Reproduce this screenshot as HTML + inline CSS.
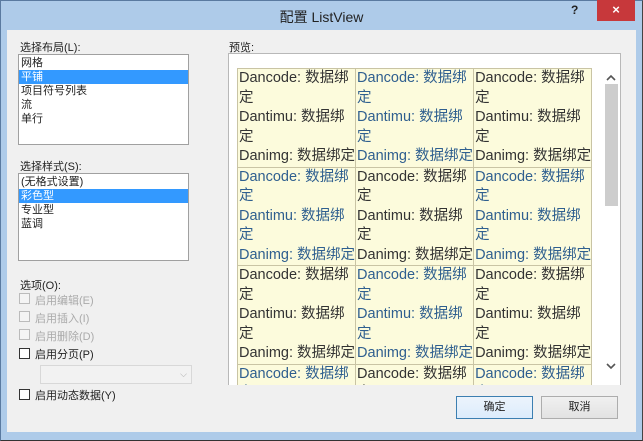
<!DOCTYPE html>
<html><head><meta charset="utf-8"><style>
*{margin:0;padding:0;box-sizing:border-box}
body{width:643px;height:441px;overflow:hidden;background:#aecbe9;font-family:"Liberation Sans","Microsoft YaHei","Noto Sans CJK SC",sans-serif;font-size:12px;color:#222;position:relative}
.a{position:absolute}
.frame{left:0;top:0;width:643px;height:441px;border:1px solid #5a7aa0;border-right-color:#444;border-bottom-color:#333}
.title{left:0;top:7px;width:643px;text-align:center;font-size:14px;color:#222}
.client{left:7px;top:30px;width:629px;height:402px;background:#f0f0f0}
.lb{background:#fff;border:1px solid #a0a0a0;padding-top:1px}
.lb div{height:14px;line-height:14px;padding-left:2px;font-size:11px}
.sel{background:#3399ff;color:#fff}
.lbl{font-size:11px}
.cb{width:11px;height:11px;border:1px solid #333;background:#fff}
.cbd{border-color:#bbb;background:#f4f4f4}
.dis{color:#aaa}
table{border-collapse:collapse;table-layout:fixed}
td{width:118px;height:98px;background:#fcfbdc;border:1px solid #c9c4a4;vertical-align:top;font-size:14.5px;line-height:19.5px;padding-left:1px;white-space:nowrap;overflow:hidden;color:#333}
td.b{color:#2f5f8f}
.btn{border:1px solid #adadad;background:linear-gradient(#f0f0f0,#e2e2e2);text-align:center;line-height:20px;font-size:11px}
</style></head><body>
<div class="a frame"></div>
<div class="a title">配置 ListView</div>
<div class="a" style="left:571px;top:3px;font-weight:bold;font-size:12px">?</div>
<div class="a" style="left:597px;top:0;width:38px;height:21px;background:#c7383b;color:#fff;text-align:center;line-height:20px;font-size:13px;font-weight:bold">×</div>
<div class="a client"></div>

<div class="a lbl" style="left:20px;top:39px">选择布局(L):</div>
<div class="a lb" style="left:18px;top:54px;width:171px;height:91px">
<div>网格</div><div class="sel">平铺</div><div>项目符号列表</div><div>流</div><div>单行</div></div>

<div class="a lbl" style="left:20px;top:158px">选择样式(S):</div>
<div class="a lb" style="left:18px;top:173px;width:171px;height:88px">
<div>(无格式设置)</div><div class="sel">彩色型</div><div>专业型</div><div>蓝调</div></div>

<div class="a lbl" style="left:20px;top:277px">选项(O):</div>
<div class="a cb cbd" style="left:19px;top:293px"></div><div class="a lbl dis" style="left:35px;top:292px">启用编辑(E)</div>
<div class="a cb cbd" style="left:19px;top:311px"></div><div class="a lbl dis" style="left:35px;top:310px">启用插入(I)</div>
<div class="a cb cbd" style="left:19px;top:329px"></div><div class="a lbl dis" style="left:35px;top:328px">启用删除(D)</div>
<div class="a cb" style="left:19px;top:348px"></div><div class="a lbl" style="left:35px;top:346px">启用分页(P)</div>
<div class="a" style="left:40px;top:365px;width:152px;height:19px;border:1px solid #d8d8d8;background:#f2f2f2;color:#aaa;text-align:right;padding-right:4px;font-size:9px;line-height:17px">⌵</div>
<div class="a cb" style="left:19px;top:389px"></div><div class="a lbl" style="left:35px;top:387px">启用动态数据(Y)</div>

<div class="a lbl" style="left:229px;top:39px">预览:</div>
<div class="a" style="left:228px;top:53px;width:393px;height:332px;background:#fff;border:1px solid #b8b8b8;border-bottom:none;overflow:hidden">
<div class="a" style="left:8px;top:14px">
<table>
<tr><td>Dancode: 数据绑<br>定<br>Dantimu: 数据绑<br>定<br>Danimg: 数据绑定</td><td class="b">Dancode: 数据绑<br>定<br>Dantimu: 数据绑<br>定<br>Danimg: 数据绑定</td><td>Dancode: 数据绑<br>定<br>Dantimu: 数据绑<br>定<br>Danimg: 数据绑定</td></tr>
<tr><td class="b">Dancode: 数据绑<br>定<br>Dantimu: 数据绑<br>定<br>Danimg: 数据绑定</td><td>Dancode: 数据绑<br>定<br>Dantimu: 数据绑<br>定<br>Danimg: 数据绑定</td><td class="b">Dancode: 数据绑<br>定<br>Dantimu: 数据绑<br>定<br>Danimg: 数据绑定</td></tr>
<tr><td>Dancode: 数据绑<br>定<br>Dantimu: 数据绑<br>定<br>Danimg: 数据绑定</td><td class="b">Dancode: 数据绑<br>定<br>Dantimu: 数据绑<br>定<br>Danimg: 数据绑定</td><td>Dancode: 数据绑<br>定<br>Dantimu: 数据绑<br>定<br>Danimg: 数据绑定</td></tr>
<tr><td class="b">Dancode: 数据绑<br>定</td><td>Dancode: 数据绑<br>定</td><td class="b">Dancode: 数据绑<br>定</td></tr>
</table></div>
<div class="a" style="left:374px;top:14px;width:16px;height:304px;background:#fff"></div>
<div class="a" style="left:376px;top:30px;width:13px;height:122px;background:#cdcdcd"></div>
<svg class="a" style="left:376px;top:20px" width="12" height="8"><path d="M2 6 L6 2 L10 6" stroke="#555" stroke-width="1.6" fill="none"/></svg>
<svg class="a" style="left:376px;top:308px" width="12" height="8"><path d="M2 2 L6 6 L10 2" stroke="#555" stroke-width="1.6" fill="none"/></svg>
</div>

<div class="a btn" style="left:456px;top:396px;width:77px;height:23px;border-color:#3c7fb1;background:linear-gradient(#ecf4fc,#dcecfc)">确定</div>
<div class="a btn" style="left:541px;top:396px;width:77px;height:23px">取消</div>
</body></html>
